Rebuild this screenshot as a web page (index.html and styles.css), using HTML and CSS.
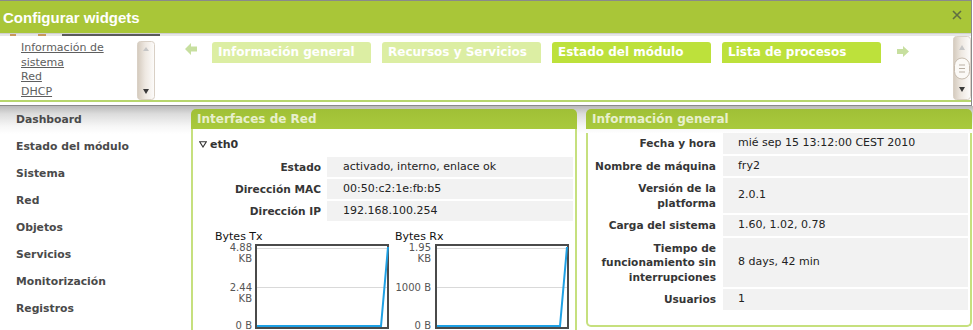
FILE: index.html
```html
<!DOCTYPE html>
<html lang="es">
<head>
<meta charset="utf-8">
<title>Configurar widgets</title>
<link rel="stylesheet" href="styles.css">
</head>
<body>
<div class="page">
  <div class="page-header"></div>
  <div class="main">
    <nav class="sidebar">
      <a>Dashboard</a>
      <a>Estado del módulo</a>
      <a>Sistema</a>
      <a>Red</a>
      <a>Objetos</a>
      <a>Servicios</a>
      <a>Monitorización</a>
      <a>Registros</a>
    </nav>
    <div class="content">
      <section class="panel">
        <div class="panel-head">Interfaces de Red</div>
        <div class="panel-body panel-body-net">
          <div class="iface">
            <svg width="8" height="7" viewBox="0 0 8 7"><polygon points="0.7,0.8 7.3,0.8 4,6" fill="none" stroke="#333" stroke-width="1.1"/></svg>
            <span>eth0</span>
          </div>
          <div class="kv">
            <div class="k">Estado</div><div class="v">activado, interno, enlace ok</div>
            <div class="k">Dirección MAC</div><div class="v">00:50:c2:1e:fb:b5</div>
            <div class="k">Dirección IP</div><div class="v">192.168.100.254</div>
          </div>
          <div class="charts">
            <div class="chart">
              <div class="chart-title">Bytes Tx</div>
              <svg width="178" height="93" viewBox="0 0 178 93">
                <rect x="45" y="89" width="132" height="4" fill="#dedede"/>
                <rect x="45" y="4" width="132" height="83" fill="#fff" stroke="#4a4a4a" stroke-width="2"/>
                <line x1="46" y1="7.5" x2="176" y2="7.5" stroke="#d9d9d9"/>
                <line x1="46" y1="46.5" x2="176" y2="46.5" stroke="#d9d9d9"/>
                <polyline points="46,85 170,85 177,6" fill="none" stroke="#1ea0e4" stroke-width="2"/>
                <g class="axis">
                  <text x="41" y="10">4.88</text>
                  <text x="41" y="21">KB</text>
                  <text x="41" y="50">2.44</text>
                  <text x="41" y="61">KB</text>
                  <text x="41" y="88">0 B</text>
                </g>
              </svg>
            </div>
            <div class="chart">
              <div class="chart-title">Bytes Rx</div>
              <svg width="178" height="93" viewBox="0 0 178 93">
                <rect x="45" y="89" width="132" height="4" fill="#dedede"/>
                <rect x="45" y="4" width="132" height="83" fill="#fff" stroke="#4a4a4a" stroke-width="2"/>
                <line x1="46" y1="7.5" x2="176" y2="7.5" stroke="#d9d9d9"/>
                <line x1="46" y1="46.5" x2="176" y2="46.5" stroke="#d9d9d9"/>
                <polyline points="46,85 169,85 176,6" fill="none" stroke="#1ea0e4" stroke-width="2"/>
                <g class="axis">
                  <text x="40" y="10">1.95</text>
                  <text x="40" y="21">KB</text>
                  <text x="40" y="50">1000 B</text>
                  <text x="40" y="88">0 B</text>
                </g>
              </svg>
            </div>
          </div>
        </div>
      </section>
      <section class="panel">
        <div class="panel-head">Información general</div>
        <div class="panel-body panel-body-info">
          <div class="kv kv-info">
            <div class="k">Fecha y hora</div><div class="v">mié sep 15 13:12:00 CEST 2010</div>
            <div class="k">Nombre de máquina</div><div class="v">fry2</div>
            <div class="k">Versión de la platforma</div><div class="v">2.0.1</div>
            <div class="k">Carga del sistema</div><div class="v">1.60, 1.02, 0.78</div>
            <div class="k">Tiempo de funcionamiento sin interrupciones</div><div class="v">8 days, 42 min</div>
            <div class="k">Usuarios</div><div class="v">1</div>
          </div>
        </div>
      </section>
    </div>
  </div>
</div>

<div class="dialog">
  <div class="dialog-title">
    <span>Configurar widgets</span>
    <svg class="close" width="10" height="10" viewBox="0 0 10 10"><path d="M1 1 L9 9 M9 1 L1 9" stroke="#5f6e42" stroke-width="1.6" fill="none"/></svg>
  </div>
  <div class="dialog-peek"></div>
  <div class="dialog-body">
    <div class="widget-list">
      <ul>
        <li><a>Información de sistema</a></li>
        <li><a>Red</a></li>
        <li><a>DHCP</a></li>
      </ul>
    </div>
    <svg class="scroll-left" width="18" height="59" viewBox="0 0 18 59">
      <defs>
        <linearGradient id="sbA" x1="0" y1="0" x2="1" y2="0">
          <stop offset="0" stop-color="#d4cabd"/>
          <stop offset="0.45" stop-color="#eee8e1"/>
          <stop offset="1" stop-color="#fdfcfb"/>
        </linearGradient>
      </defs>
      <rect x="0.5" y="0.5" width="17" height="58" rx="3" fill="url(#sbA)" stroke="#d9d0c5"/>
      <polygon points="6,10 12,10 9,6" fill="#c6c6c6"/>
      <polygon points="6,48 12,48 9,53" fill="#3a3a3a"/>
    </svg>
    <div class="carousel">
      <svg class="arrow arrow-left" width="12" height="12" viewBox="0 0 12 12"><polygon points="0,6 6,0 6,3.5 12,3.5 12,8.5 6,8.5 6,12" fill="#c7df9f"/></svg>
      <div class="tabs">
        <div class="tab off">Información general</div>
        <div class="tab off">Recursos y Servicios</div>
        <div class="tab">Estado del módulo</div>
        <div class="tab">Lista de procesos</div>
      </div>
      <svg class="arrow arrow-right" width="12" height="11" viewBox="0 0 12 11"><polygon points="12,5.5 6,0 6,3 0,3 0,8 6,8 6,11" fill="#c7df9f"/></svg>
    </div>
    <svg class="scroll-right" width="18" height="64" viewBox="0 0 18 64">
      <defs>
        <linearGradient id="sbB" x1="0" y1="0" x2="1" y2="0">
          <stop offset="0" stop-color="#d4cabd"/>
          <stop offset="0.45" stop-color="#eee8e1"/>
          <stop offset="1" stop-color="#fdfcfb"/>
        </linearGradient>
      </defs>
      <rect x="0.5" y="0.5" width="17" height="63" rx="3" fill="url(#sbB)" stroke="#d9d0c5"/>
      <polygon points="6,14 12,14 9,9" fill="#c6c6c6"/>
      <rect x="1.5" y="22" width="15" height="21" rx="7.5" fill="#fbf9f6" stroke="#c6bbae"/>
      <path d="M6 29 H12 M6 32.5 H12 M6 36 H12" stroke="#b9afa3" stroke-width="1"/>
      <polygon points="6,51 12,51 9,56" fill="#3a3a3a"/>
    </svg>
  </div>
  <div class="dialog-foot"></div>
</div>
</body>
</html>
```

FILE: styles.css
```css
* { box-sizing: border-box; }

html, body {
  margin: 0;
  padding: 0;
  height: 330px;
  overflow: hidden;
  background: #fff;
}

body {
  position: relative;
  font-family: "DejaVu Sans", Verdana, sans-serif;
  font-size: 11px;
  color: #222;
}

/* ---------- page behind the dialog ---------- */
.page-header { height: 106px; }

.main {
  display: flex;
  height: 224px;
  background: linear-gradient(#b9b9b9 0, #dcdcdc 8px, #f6f6f6 20px, #fff 28px);
}

.sidebar {
  width: 191px;
  flex: none;
  display: flex;
  flex-direction: column;
}

.sidebar a {
  display: block;
  height: 27px;
  line-height: 27px;
  padding-left: 16px;
  font-weight: bold;
  font-size: 10.8px;
  color: #4a4a4a;
  text-decoration: none;
}

.content {
  display: flex;
  gap: 9px;
  padding-top: 3px;
}

.panel {
  width: 386px;
  flex: none;
}

.panel-head {
  height: 20px;
  line-height: 20px;
  padding-left: 6px;
  border-radius: 5px 5px 0 0;
  background: linear-gradient(#a0c036, #a9ca3d);
  color: #e8f0cd;
  font-weight: bold;
  font-size: 12px;
}

.panel-body {
  border: 2px solid #c6e07e;
  border-top: 0;
  border-radius: 0 0 5px 5px;
  background: #fff;
}

.panel-body-net { padding-top: 8px; height: 260px; }
.panel-body-info { padding-bottom: 15px; }

.iface {
  display: flex;
  align-items: center;
  gap: 3px;
  padding-left: 6px;
  height: 15px;
  font-weight: bold;
  color: #333;
}

.kv {
  display: grid;
  grid-template-columns: 130px 1fr;
  row-gap: 2px;
  margin: 5px 2px 0 4px;
}

.kv .k {
  display: flex;
  align-items: center;
  justify-content: flex-end;
  text-align: right;
  padding: 3px 6px 3px 0;
  line-height: 14px;
  font-weight: bold;
  font-size: 10.6px;
  color: #363636;
}

.kv .v {
  display: flex;
  align-items: center;
  background: #f2f2f2;
  padding: 3px 0 3px 16px;
  line-height: 14px;
  color: #222;
}

.kv-info {
  grid-template-columns: 131px 1fr;
  margin: 4px 2px 0 4px;
}

.kv-info .k { padding-right: 7px; line-height: 14.5px; }
.kv-info .v { padding-left: 15px; line-height: 14.5px; }

/* charts */
.charts {
  display: flex;
  gap: 2px;
  padding: 8px 0 0 18px;
}

.chart { width: 178px; }

.chart-title {
  padding-left: 4px;
  line-height: 15px;
  margin-bottom: -3px;
  color: #111;
}

.chart svg { display: block; }

.axis text {
  font-family: "DejaVu Sans", Verdana, sans-serif;
  font-size: 10px;
  fill: #555;
  text-anchor: end;
}

/* ---------- dialog ---------- */
.dialog {
  position: absolute;
  top: 0;
  left: 0;
  width: 972px;
  border: 1px solid #8a8a8a;
  border-left: 0;
  background: #fff;
}

.dialog-title {
  height: 32px;
  display: flex;
  justify-content: space-between;
  padding: 2px 0 0 3px;
  background: #a9c638;
  font-family: "Liberation Sans", Arial, sans-serif;
  font-weight: bold;
  font-size: 15px;
  line-height: 30px;
  color: #fff;
}

.close {
  flex: none;
  margin: 7px 9px 0 0;
}

.dialog-peek {
  height: 3px;
  background:
    linear-gradient(#d0d0d0, #d0d0d0) 0 0 / 100% 1px no-repeat,
    linear-gradient(to right,
      #e6e6e6 0 10px, #c8975a 10px 16px, #e6e6e6 16px 38px,
      #c8975a 38px 46px, #e6e6e6 46px 62px, #5a5a5a 62px 160px,
      #e6e6e6 160px);
}

.dialog-body {
  display: flex;
  height: 66px;
  border-bottom: 2px solid #b7d66d;
}

.widget-list {
  width: 137px;
  flex: none;
  height: 64px;
  overflow: hidden;
  padding: 5px 0 0 21px;
}

.widget-list ul {
  margin: 0;
  padding: 0;
  list-style: none;
}

.widget-list li { line-height: 14.5px; }

.widget-list a {
  color: #5e5e5e;
  text-decoration: underline;
}

.scroll-left {
  flex: none;
  margin-top: 5px;
}

.scroll-right { flex: none; }

.carousel {
  flex: 1;
  display: flex;
  align-items: flex-start;
  padding-left: 30px;
}

.arrow { flex: none; }
.arrow-left { margin-top: 7px; }
.arrow-right { margin: 10px 0 0 16px; }

.tabs {
  display: flex;
  gap: 11px;
  margin: 6px 0 0 15px;
}

.tab {
  width: 159px;
  height: 21px;
  line-height: 21px;
  padding-left: 6px;
  border-radius: 3px 3px 0 0;
  background: #bde13b;
  color: #fff;
  font-weight: bold;
  font-size: 12px;
  white-space: nowrap;
}

.tab.off { background: #dceea3; }

.dialog-foot { height: 3px; }
```
